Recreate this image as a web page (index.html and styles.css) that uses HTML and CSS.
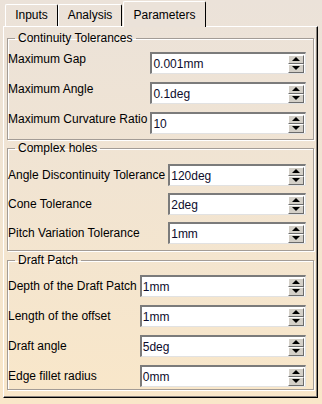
FILE: index.html
```html
<!DOCTYPE html>
<html>
<head>
<meta charset="utf-8">
<link rel="stylesheet" href="styles.css">
</head>
<body>
<div class="window">
  <div class="tabs">
    <div class="tab t-inputs">Inputs</div>
    <div class="tab t-analysis">Analysis</div>
    <div class="tab active">Parameters</div>
  </div>
  <div class="panel">
    <fieldset class="group g1">
      <legend>Continuity Tolerances</legend>
      <div class="row"><span class="label">Maximum Gap</span><div class="spin"><span class="val">0.001mm</span><div class="btns"><span class="b up"></span><span class="b down"></span></div></div></div>
      <div class="row"><span class="label">Maximum Angle</span><div class="spin"><span class="val">0.1deg</span><div class="btns"><span class="b up"></span><span class="b down"></span></div></div></div>
      <div class="row"><span class="label">Maximum Curvature Ratio</span><div class="spin"><span class="val">10</span><div class="btns"><span class="b up"></span><span class="b down"></span></div></div></div>
    </fieldset>
    <fieldset class="group g2">
      <legend>Complex holes</legend>
      <div class="row"><span class="label">Angle Discontinuity Tolerance</span><div class="spin"><span class="val">120deg</span><div class="btns"><span class="b up"></span><span class="b down"></span></div></div></div>
      <div class="row"><span class="label">Cone Tolerance</span><div class="spin"><span class="val">2deg</span><div class="btns"><span class="b up"></span><span class="b down"></span></div></div></div>
      <div class="row"><span class="label">Pitch Variation Tolerance</span><div class="spin"><span class="val">1mm</span><div class="btns"><span class="b up"></span><span class="b down"></span></div></div></div>
    </fieldset>
    <fieldset class="group g3">
      <legend>Draft Patch</legend>
      <div class="row"><span class="label">Depth of the Draft Patch</span><div class="spin"><span class="val">1mm</span><div class="btns"><span class="b up"></span><span class="b down"></span></div></div></div>
      <div class="row"><span class="label">Length of the offset</span><div class="spin"><span class="val">1mm</span><div class="btns"><span class="b up"></span><span class="b down"></span></div></div></div>
      <div class="row"><span class="label">Draft angle</span><div class="spin"><span class="val">5deg</span><div class="btns"><span class="b up"></span><span class="b down"></span></div></div></div>
      <div class="row"><span class="label">Edge fillet radius</span><div class="spin"><span class="val">0mm</span><div class="btns"><span class="b up"></span><span class="b down"></span></div></div></div>
    </fieldset>
  </div>
</div>
</body>
</html>
```
FILE: styles.css
```css
html, body { margin: 0; padding: 0; }
body {
  width: 322px; height: 404px; overflow: hidden;
  background: linear-gradient(to bottom, #ebe2d9 0%, #f1e4d2 45%, #f9e7c9 100%);
  font-family: "Liberation Sans", Arial, sans-serif;
  font-size: 12px;
  color: #000;
}
.window { padding: 0 4px 0 3px; }
.tabs { display: flex; align-items: flex-end; height: 26px; padding-left: 2px; }
.tab {
  height: 22px; line-height: 20px; box-sizing: border-box; text-align: center;
  border-top: 1px solid #fff; border-left: 1px solid #fff; border-right: 1px solid #000;
  border-radius: 2px 2px 0 0; font-size: 12px; color: #000;
}
.t-inputs { width: 53px; }
.t-analysis { width: 64px; }
.tab.active {
  width: 83px; height: 26px; line-height: 26px; margin-left: 1px;
  margin-bottom: -1px; position: relative; z-index: 1;
  background: #ebe2d9;
}
.panel {
  position: relative;
  border-top: 1px solid #fff; border-left: 1px solid #fff;
  border-right: 1px solid #000; border-bottom: 1px solid #000;
  box-shadow: inset -1px -1px 0 #8a847e;
  padding: 4px 3px 0 3px; height: 372px; box-sizing: border-box;
  display: flex; flex-direction: column;
}
.group {
  margin: 0; padding: 0 7px 0 0; min-width: 0;
  border: 1px solid #a39c96; box-shadow: inset 1px 1px 0 #fff, 1px 1px 0 #fff;
  display: grid; grid-template-columns: auto 1fr; column-gap: 3px;
}
.group legend { padding: 0 3px; margin-left: 7px; font-size: 12px; line-height: 14px; }
.row { display: contents; }
.label { font-size: 12px; align-self: center; line-height: 14px; }
.g1 { padding-top: 7px; padding-bottom: 5px; row-gap: 8px; }
.g1 .label { align-self: start; margin-top: 0; }
.g2 { margin-top: 1px; padding-top: 9px; padding-bottom: 6px; row-gap: 7px; }
.g3 { margin-top: 2px; padding-top: 8px; padding-bottom: 2px; row-gap: 8px; }
.spin {
  height: 22px; box-sizing: border-box; background: #fff;
  border-top: 2px solid #7b7b7b; border-left: 2px solid #7b7b7b;
  border-bottom: 1px solid #e2e2e2; border-right: 1px solid #e2e2e2;
  display: flex; align-items: center; justify-content: space-between;
}
.val { font-size: 12px; padding-left: 1px; color: #0c0c2c; }
.btns { display: flex; flex-direction: column; margin-right: 1px; }
.b {
  width: 16px; height: 9px; box-sizing: border-box; background: #d4d0c8;
  border: 1px solid #6b6b6b; border-top-color: #fff; border-left-color: #fff;
  display: flex; align-items: center; justify-content: center;
}
.b::after { content: ""; width: 0; height: 0; border-left: 4px solid transparent; border-right: 4px solid transparent; }
.b.up::after { border-bottom: 4px solid #000; }
.b.down::after { border-top: 4px solid #000; }
```
